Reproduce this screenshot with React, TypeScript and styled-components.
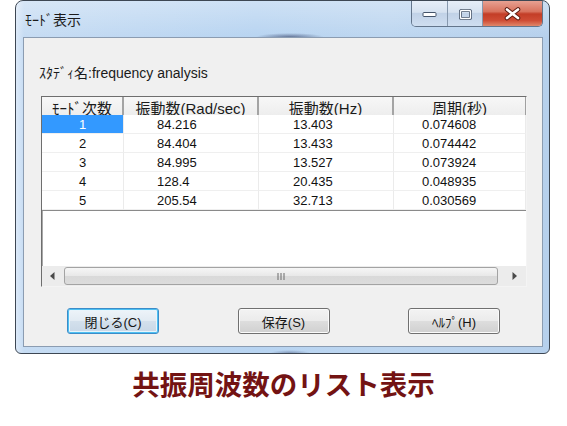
import React from 'react';
import styled, { createGlobalStyle, css } from 'styled-components';

const GlobalStyle = createGlobalStyle`
  html, body {
    margin: 0;
    padding: 0;
    background: #ffffff;
  }
  body {
    font-family: 'Liberation Sans', 'Noto Sans CJK JP', sans-serif;
    color: #111;
  }
`;

const modes = [
  ['1', '84.216', '13.403', '0.074608'],
  ['2', '84.404', '13.433', '0.074442'],
  ['3', '84.995', '13.527', '0.073924'],
  ['4', '128.4', '20.435', '0.048935'],
  ['5', '205.54', '32.713', '0.030569'],
];

const indents = [0, 33, 34, 28];

const App: React.FC = () => {
  return (
    <>
      <GlobalStyle />
      <Page>
        <Window>
          <TitleBar>
            <Title>ﾓｰﾄﾞ表示</Title>
            <CaptionGroup>
              <CaptionButton $width={36}>
                <svg width="15" height="7" viewBox="0 0 15 7">
                  <rect x="1" y="1.5" width="13" height="4" rx="1" fill="#fff" stroke="#44546a" />
                </svg>
              </CaptionButton>
              <CaptionButton $width={35}>
                <svg width="13" height="11" viewBox="0 0 13 11">
                  <rect x="1.5" y="1.5" width="10" height="8" rx="1" fill="none" stroke="#44546a" strokeWidth="3" />
                  <rect x="1.5" y="1.5" width="10" height="8" rx="1" fill="none" stroke="#fff" strokeWidth="1.4" />
                </svg>
              </CaptionButton>
              <CloseButton>
                <svg width="17" height="14" viewBox="0 0 17 14">
                  <path d="M3 2.5 L14 11 M14 2.5 L3 11" stroke="#5e1d12" strokeWidth="4.6" strokeLinecap="round" />
                  <path d="M3 2.5 L14 11 M14 2.5 L3 11" stroke="#fff" strokeWidth="2.6" strokeLinecap="round" />
                </svg>
              </CloseButton>
            </CaptionGroup>
          </TitleBar>
          <Client>
            <StudyLabel>ｽﾀﾃﾞｨ名:frequency analysis</StudyLabel>
            <ListBox>
              <GridRow>
                <HeadCell>ﾓｰﾄﾞ次数</HeadCell>
                <HeadCell>振動数(Rad/sec)</HeadCell>
                <HeadCell>振動数(Hz)</HeadCell>
                <HeadCell $last>周期(秒)</HeadCell>
              </GridRow>
              {modes.map((row, r) => (
                <GridRow key={row[0]} $body>
                  {row.map((v, c) => (
                    <Cell key={c} $indent={indents[c]} $selected={r === 0 && c === 0}>
                      {v}
                    </Cell>
                  ))}
                </GridRow>
              ))}
              <GridEnd />
              <ScrollBar>
                <ArrowButton>
                  <svg width="5" height="8" viewBox="0 0 5 8">
                    <path d="M4.5 0 L0 4 L4.5 8 Z" fill="#4a4a4a" />
                  </svg>
                </ArrowButton>
                <Track>
                  <Thumb>
                    <svg width="8" height="7" viewBox="0 0 8 7">
                      <path d="M1 0 V7 M4 0 V7 M7 0 V7" stroke="#6a6a6a" strokeWidth="1" />
                    </svg>
                  </Thumb>
                </Track>
                <ArrowButton $right>
                  <svg width="5" height="8" viewBox="0 0 5 8">
                    <path d="M0.5 0 L5 4 L0.5 8 Z" fill="#4a4a4a" />
                  </svg>
                </ArrowButton>
              </ScrollBar>
            </ListBox>
            <ButtonRow>
              <PushButton $default>閉じる(C)</PushButton>
              <PushButton>保存(S)</PushButton>
              <PushButton>ﾍﾙﾌﾟ(H)</PushButton>
            </ButtonRow>
          </Client>
        </Window>
        <Caption>共振周波数のリスト表示</Caption>
      </Page>
    </>
  );
};

export default App;

const Page = styled.div`
  width: 567px;
  height: 426px;
  display: flex;
  flex-direction: column;
  overflow: hidden;
`;

const Window = styled.div`
  box-sizing: border-box;
  margin-left: 15px;
  width: 535px;
  height: 354px;
  border: 1px solid #3d4753;
  border-radius: 8px 8px 6px 6px;
  background:
    radial-gradient(ellipse 34px 4px at 274px 36px, rgba(30, 40, 80, 0.55), rgba(30, 40, 80, 0) 100%),
    radial-gradient(ellipse 20px 3px at 274px 352px, rgba(30, 40, 80, 0.35), rgba(30, 40, 80, 0) 100%),
    linear-gradient(90deg, #dce9f8 0px, #c6dcf3 8px, #b8d4f1 45%, #bdd6f0 70%, #b6d0ec 100%);
  display: flex;
  flex-direction: column;
  overflow: hidden;
`;

const TitleBar = styled.div`
  height: 36px;
  flex: none;
  display: flex;
  justify-content: space-between;
  align-items: flex-start;
  background: linear-gradient(180deg, rgba(255, 255, 255, 0.3) 0%, rgba(255, 255, 255, 0) 100%);
`;

const Title = styled.div`
  padding: 9px 0 0 9px;
  font-size: 14px;
  line-height: 18px;
  color: #1b1b1b;
  font-family: 'Noto Sans CJK JP', sans-serif;
`;

const CaptionGroup = styled.div`
  display: flex;
  height: 25px;
  margin-right: 6px;
  border: 1px solid #63758b;
  border-top: none;
  border-radius: 0 0 5px 5px;
  overflow: hidden;
`;

const CaptionButton = styled.div<{ $width: number }>`
  width: ${(p) => p.$width}px;
  display: flex;
  align-items: center;
  justify-content: center;
  padding-top: 2px;
  box-sizing: border-box;
  background: linear-gradient(180deg, #e6eef8 0%, #d6e2f0 45%, #c1d2e7 50%, #cfdef0 100%);
  border-right: 1px solid #8799ae;
`;

const CloseButton = styled.div`
  width: 59px;
  display: flex;
  align-items: center;
  justify-content: center;
  padding-top: 1px;
  box-sizing: border-box;
  background: linear-gradient(180deg, #e7a192 0%, #d8735e 42%, #c33d27 52%, #cf4d35 78%, #e0876a 100%);
`;

const Client = styled.div`
  flex: 1;
  margin: 0 6px 6px 7px;
  border: 1px solid #8b9cb1;
  background: #f0f0f0;
  padding: 27px 15px 0 17px;
  display: flex;
  flex-direction: column;
`;

const StudyLabel = styled.div`
  font-size: 14px;
  line-height: 16px;
  margin-bottom: 15px;
  margin-left: -2px;
  color: #1a1a1a;
`;

const ListBox = styled.div`
  box-sizing: border-box;
  height: 191px;
  background: #ffffff;
  border: 1px solid;
  border-color: #6e6e6e #f4f4f4 #f4f4f4 #6e6e6e;
  box-shadow: inset 1px 1px 0 #a8a8a8;
  display: flex;
  flex-direction: column;
`;

const GridRow = styled.div<{ $body?: boolean }>`
  display: grid;
  grid-template-columns: 82px 135px 135px 1fr;
  height: ${(p) => (p.$body ? 19 : 18)}px;
`;

const HeadCell = styled.div<{ $last?: boolean }>`
  display: flex;
  align-items: center;
  justify-content: center;
  font-size: 15px;
  color: #1a1a1a;
  background: linear-gradient(180deg, #f7f7f7 0%, #ececec 100%);
  border-bottom: 1px solid #c4c4c4;
  border-right: ${(p) => (p.$last ? '1px solid #a0a0a0' : '2px solid #a4a4a4')};
  box-sizing: border-box;
  white-space: nowrap;
`;

const Cell = styled.div<{ $indent: number; $selected?: boolean }>`
  display: flex;
  align-items: center;
  justify-content: ${(p) => (p.$indent ? 'flex-start' : 'center')};
  padding-left: ${(p) => p.$indent}px;
  font-size: 13px;
  color: ${(p) => (p.$selected ? '#fff' : '#111')};
  background: ${(p) => (p.$selected ? '#3399ff' : '#fff')};
  border-right: 1px solid #ebebeb;
  border-bottom: 1px solid #efefef;
  box-sizing: border-box;
`;

const GridEnd = styled.div`
  height: 1px;
  background: #8a8a8a;
`;

const ScrollBar = styled.div`
  margin-top: auto;
  height: 20px;
  display: flex;
  background: #ececec;
`;

const ArrowButton = styled.div<{ $right?: boolean }>`
  width: ${(p) => (p.$right ? 28 : 21)}px;
  display: flex;
  align-items: center;
  justify-content: ${(p) => (p.$right ? 'flex-end' : 'center')};
  padding-right: ${(p) => (p.$right ? 9 : 0)}px;
  box-sizing: border-box;
`;

const Track = styled.div`
  flex: 1;
  display: flex;
  align-items: stretch;
  padding: 1px 0 1px 1px;
`;

const Thumb = styled.div`
  width: 434px;
  box-sizing: border-box;
  border: 1px solid #a3a3a3;
  border-radius: 3px;
  background: linear-gradient(180deg, #f6f6f6 0%, #e8e8e8 50%, #d9d9d9 51%, #dcdcdc 100%);
  display: flex;
  align-items: center;
  justify-content: center;
`;

const ButtonRow = styled.div`
  display: flex;
  justify-content: space-between;
  padding: 0 27px 0 26px;
  margin-top: 21px;
`;

const PushButton = styled.div<{ $default?: boolean }>`
  width: 92px;
  height: 26px;
  box-sizing: border-box;
  display: flex;
  align-items: center;
  justify-content: center;
  font-size: 13px;
  color: #151515;
  border-radius: 3px;
  border: 1px solid #707070;
  background: linear-gradient(180deg, #f3f3f3 0%, #ebebeb 48%, #dddddd 52%, #d0d0d0 100%);
  box-shadow: inset 0 0 0 1px #fbfbfb;
  ${(p) =>
    p.$default &&
    css`
      border-color: #3c8cc8;
      background: linear-gradient(180deg, #eef4f9 0%, #e2ebf3 48%, #d3e0ec 52%, #c8d7e6 100%);
      box-shadow: inset 0 0 0 1px #4ec0f2, inset 0 0 0 2px #e8f4fb;
    `}
`;

const Caption = styled.div`
  margin-top: 12px;
  text-align: center;
  font-family: 'Noto Sans CJK JP', sans-serif;
  font-weight: bold;
  font-size: 27.5px;
  line-height: 34px;
  color: #731313;
`;
